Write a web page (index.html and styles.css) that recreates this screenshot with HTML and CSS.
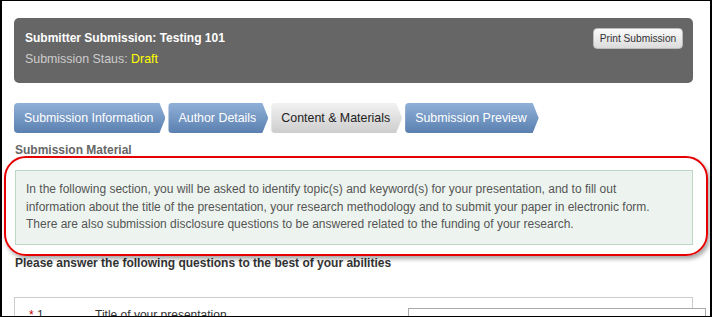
FILE: index.html
```html
<!DOCTYPE html>
<html lang="en">
    <head>
        <meta charset="UTF-8">
        <title>Submitter Submission</title>
        <link rel="stylesheet" href="styles.css">
    </head>
    <body>
        <div class="frame">
            <div class="cabecera">
                <div class="cabecera-texto">
                    <h1>Submitter Submission: Testing 101</h1>
                    <p class="estado">Submission Staus: <span class="borrador">Draft</span></p>
                </div>
                <button class="imprimir">Print Submission</button>
            </div>

            <div class="pasos">
                <a class="paso">Submission Information</a>
                <a class="paso">Author Details</a>
                <a class="paso activo">Content &amp; Materials</a>
                <a class="paso">Submission Preview</a>
            </div>

            <h2>Submission Material</h2>
            <div class="aviso">
                In the following section, you will be asked to identify topic(s) and keyword(s) for your presentation, and to fill out<br>
                information about the title of the presentation, your research methodology and to submit your paper in electronic form.<br>
                There are also submission disclosure questions to be answered related to the funding of your research.
            </div>
            <div class="marca"></div>

            <h3>Please answer the following questions to the best of your abilities</h3>

            <div class="preguntas">
                <div class="pregunta">
                    <span class="numero"><span class="requerido">*</span> 1</span>
                    <span class="etiqueta">Title of your presentation</span>
                    <input type="text" class="respuesta">
                </div>
            </div>
        </div>
    </body>
</html>
```

FILE: styles.css
```css
html, body {
    margin: 0;
    padding: 0;
    overflow: hidden;
}
body {
    font-family: "Liberation Sans", Arial, sans-serif;
    font-size: 12px;
    color: #333;
    background: #fff;
}
.frame {
    position: relative;
    width: 712px;
    height: 317px;
    box-sizing: border-box;
    border: 1px solid #000;
    border-left-width: 2px;
    border-right-width: 2px;
    padding: 17px 17px 0 12px;
    overflow: hidden;
}
.cabecera {
    display: flex;
    justify-content: space-between;
    align-items: flex-start;
    background-color: #666;
    border-radius: 5px;
    height: 65px;
    box-sizing: border-box;
    padding: 10px 10px 0 11px;
}
.cabecera h1 {
    margin: 3px 0 0 0;
    font-size: 12px;
    line-height: 15px;
    color: #fff;
}
.estado {
    margin: 5px 0 0 0;
    font-size: 12.4px;
    line-height: 16px;
    color: #ccc;
}
.borrador {
    color: #ff0;
}
.imprimir {
    font-family: "Liberation Sans", Arial, sans-serif;
    font-size: 10.2px;
    color: #333;
    height: 21px;
    width: 90px;
    padding: 0;
    border: 1px solid #bbb;
    border-radius: 4px;
    background: linear-gradient(#fafafa, #dcdcdc);
}
.pasos {
    display: flex;
    gap: 3px;
    margin-top: 20px;
}
.paso {
    display: block;
    height: 30px;
    line-height: 30px;
    padding: 0 12px 0 10px;
    color: #fff;
    font-size: 12.4px;
    background: linear-gradient(#8fb0d8, #5b80b0);
    border-radius: 4px 0 0 4px;
    clip-path: polygon(0 0, calc(100% - 6px) 0, 100% 50%, calc(100% - 6px) 100%, 0 100%);
}
.paso.activo {
    color: #222;
    background: linear-gradient(#f2f2f2, #cdcdcd);
}
h2 {
    margin: 10px 0 0 1px;
    font-size: 12px;
    line-height: 15px;
    color: #666;
}
.aviso {
    margin: 12px 0 0 1px;
    padding: 10px;
    line-height: 17.5px;
    color: #555;
    background-color: #edf4ef;
    border: 1px solid #bcd7c6;
}
.marca {
    position: absolute;
    left: 2px;
    top: 155px;
    width: 704px;
    height: 100px;
    box-sizing: border-box;
    border: 2px solid #e60000;
    border-radius: 22px;
    box-shadow: 2px 3px 4px rgba(0, 0, 0, 0.35);
}
h3 {
    margin: 10px 0 0 1px;
    font-size: 12px;
    line-height: 16px;
    color: #333;
}
.preguntas {
    margin-top: 26px;
    border: 1px solid #ccc;
    height: 60px;
}
.pregunta {
    display: flex;
    align-items: flex-start;
    padding: 10px 0 0 14px;
}
.numero {
    width: 66px;
    flex: none;
}
.requerido {
    color: #c00;
}
.etiqueta {
    width: 313px;
    flex: none;
}
.respuesta {
    margin: 0;
    width: 298px;
    height: 20px;
    box-sizing: border-box;
    border: 1px solid #aaa;
    flex: none;
}
```
